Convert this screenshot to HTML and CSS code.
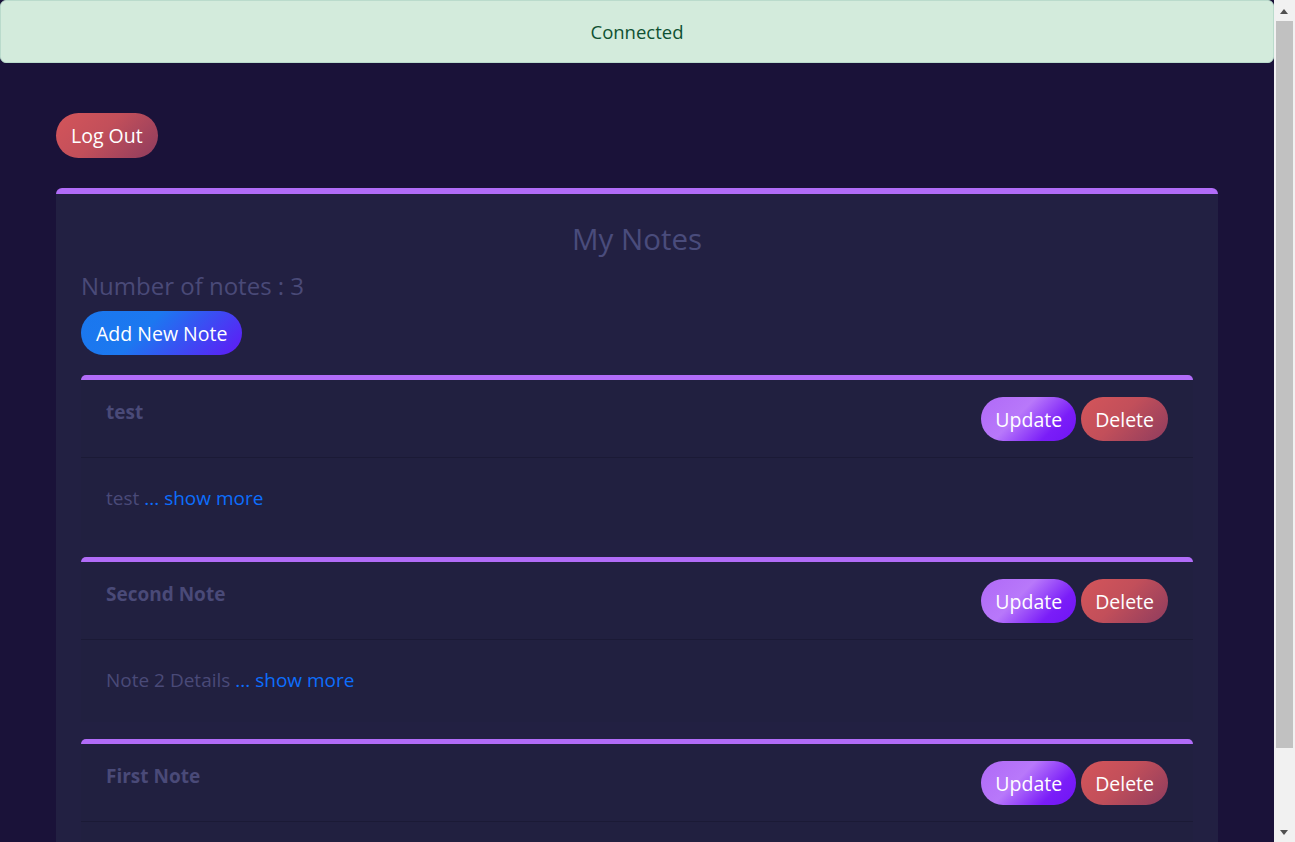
FILE: index.html
```html
<!DOCTYPE html>
<html lang="en">
<head>
<meta charset="utf-8">
<title>My Notes</title>
<link rel="stylesheet" href="styles.css">
</head>
<body>
<div class="page">
  <div class="alert">Connected</div>
  <main class="main">
    <button class="btn btn-danger">Log Out</button>
    <section class="notes">
      <h1 class="notes-title">My Notes</h1>
      <h2 class="notes-count">Number of notes : 3</h2>
      <button class="btn btn-add">Add New Note</button>

      <article class="note">
        <header class="note-head">
          <h3 class="note-title">test</h3>
          <div class="note-actions">
            <button class="btn btn-update">Update</button>
            <button class="btn btn-danger">Delete</button>
          </div>
        </header>
        <div class="note-body">test <a class="more" href="#">... show more</a></div>
      </article>

      <article class="note">
        <header class="note-head">
          <h3 class="note-title">Second Note</h3>
          <div class="note-actions">
            <button class="btn btn-update">Update</button>
            <button class="btn btn-danger">Delete</button>
          </div>
        </header>
        <div class="note-body">Note 2 Details <a class="more" href="#">... show more</a></div>
      </article>

      <article class="note">
        <header class="note-head">
          <h3 class="note-title">First Note</h3>
          <div class="note-actions">
            <button class="btn btn-update">Update</button>
            <button class="btn btn-danger">Delete</button>
          </div>
        </header>
        <div class="note-body">First Note Details <a class="more" href="#">... show more</a></div>
      </article>
    </section>
  </main>
</div>
<div class="scrollbar" aria-hidden="true">
  <span class="sb-arrow sb-up"></span>
  <span class="sb-thumb"></span>
  <span class="sb-arrow sb-down"></span>
</div>
</body>
</html>
```
FILE: styles.css
```css
body {
  margin: 0;
  background: #1a1239;
  font-family: "Open Sans", "Noto Sans", "Liberation Sans", sans-serif;
  color: #4a4a78;
}
.page {
  margin-right: 21px;
}
.alert {
  box-sizing: border-box;
  height: 63px;
  display: flex;
  align-items: center;
  justify-content: center;
  background: #d3ebdc;
  border: 1px solid #badbcc;
  border-radius: 6px;
  color: #0f5132;
  font-size: 18.5px;
}
.main {
  padding: 50px 56px 40px;
}
.btn {
  height: 44px;
  padding: 0 15px;
  border: none;
  border-radius: 22px;
  color: #fff;
  font-family: inherit;
  font-size: 19.5px;
  cursor: pointer;
}
.main > .btn-danger {
  height: 45px;
  border-radius: 23px;
}
.btn-danger {
  background: linear-gradient(135deg, #d4555a 0%, #c24f5a 45%, #8e3c5e 100%);
}
.btn-update {
  background: linear-gradient(135deg, #b06af7 0%, #b878fa 40%, #7a1df8 75%, #6f14f5 100%);
}
.btn-add {
  background: linear-gradient(135deg, #1a77ee 0%, #1c78f0 40%, #6118f6 100%);
}
.notes {
  margin-top: 30px;
  background: #222042;
  border-top: 6px solid #b16cf8;
  border-radius: 6px 6px 0 0;
  padding: 26px 25px 20px;
}
.notes-title {
  margin: 0;
  text-align: center;
  font-size: 29.5px;
  font-weight: 500;
  line-height: 38px;
  color: #4a4c7c;
}
.notes-count {
  margin: 13px 0 11px;
  font-size: 24px;
  font-weight: 500;
  line-height: 29px;
  color: #4a4a78;
}
.notes .btn-add {
  margin-bottom: 20px;
}
.note {
  background: #212040;
  border-top: 5px solid #b16cf8;
  border-radius: 5px 5px 0 0;
  margin-bottom: 17px;
}
.note-head {
  display: flex;
  justify-content: space-between;
  align-items: flex-start;
  padding: 17px 25px 16px;
  border-bottom: 1px solid #1b1a36;
}
.note-title {
  margin: 2px 0 0;
  font-size: 19px;
  font-weight: 700;
  line-height: 27px;
  color: #4a4a78;
}
.note-actions {
  display: flex;
  gap: 5px;
}
.note-actions .btn {
  padding: 0 14px;
}
.note-body {
  padding: 27px 25px 28px;
  font-size: 19px;
  line-height: 27px;
  color: #4a4a78;
}
.more {
  color: #0d6efd;
  text-decoration: none;
}
.scrollbar {
  position: fixed;
  top: 0;
  right: 0;
  width: 21px;
  height: 100vh;
  background: #f1f1f1;
}
.sb-thumb {
  position: absolute;
  top: 21px;
  left: 2px;
  right: 2px;
  height: 727px;
  background: #c1c1c1;
}
.sb-arrow {
  position: absolute;
  left: 6px;
  width: 0;
  height: 0;
  border-left: 4.5px solid transparent;
  border-right: 4.5px solid transparent;
}
.sb-up {
  top: 9px;
  border-bottom: 5px solid #505050;
}
.sb-down {
  bottom: 7px;
  border-top: 5px solid #505050;
}
```
